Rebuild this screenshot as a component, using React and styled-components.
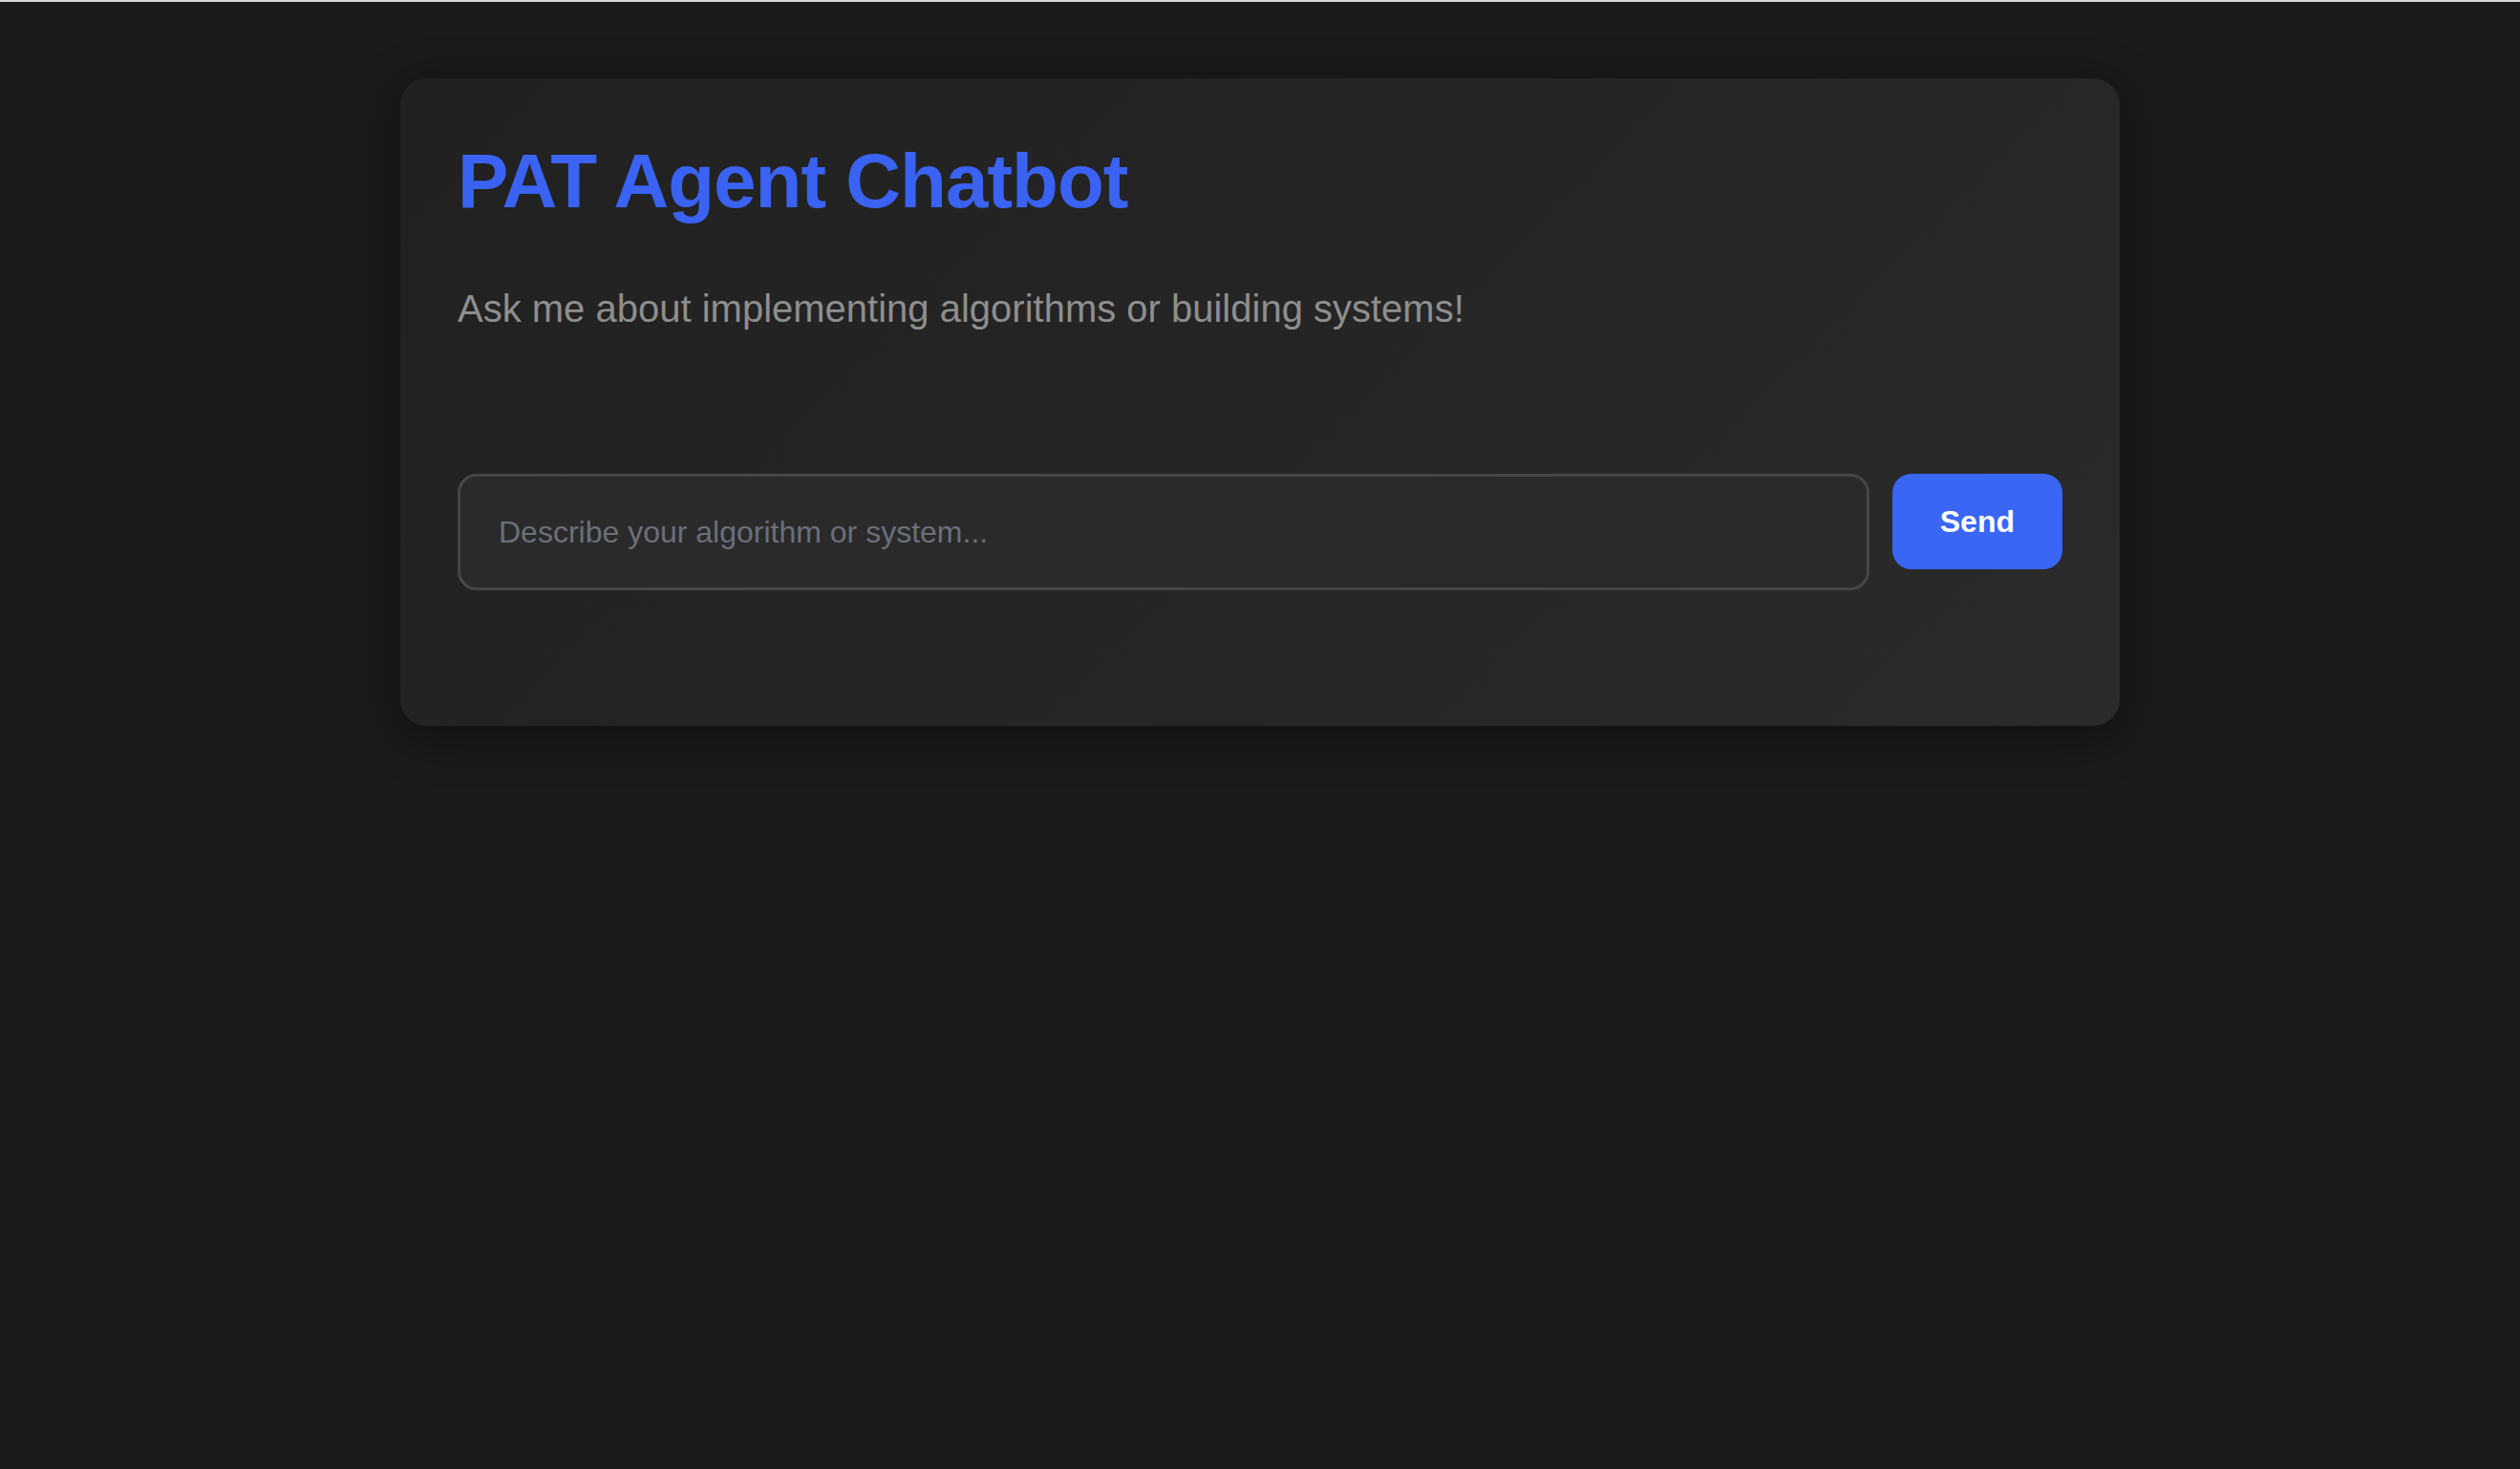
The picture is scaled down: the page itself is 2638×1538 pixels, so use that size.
import React, { useState } from 'react'
import styled, { createGlobalStyle } from 'styled-components'

const GlobalStyle = createGlobalStyle`
  * { box-sizing: border-box; }
  html, body { margin: 0; padding: 0; }
  body {
    min-height: 100vh;
    background: #1b1b1b;
    border-top: 2px solid #d9d9d9;
    font-family: "Liberation Sans", Arial, Helvetica, sans-serif;
  }
`

const Page = styled.div`
  padding-top: 80px;
  display: flex;
  justify-content: center;
`

const Card = styled.div`
  width: 1800px;
  padding: 62px 60px 60px;
  border-radius: 28px;
  background: linear-gradient(135deg, #212121 0%, #252525 50%, #2b2b2b 100%);
  box-shadow: 0 10px 50px rgba(0, 0, 0, 0.45);
`

const Title = styled.h1`
  margin: 0;
  font-size: 80px;
  font-weight: 700;
  line-height: normal;
  letter-spacing: -1px;
  color: #3a63f3;
`

const Subtitle = styled.p`
  margin: 65px 0 0;
  font-size: 40px;
  line-height: normal;
  color: #8e8e8e;
`

const Messages = styled.div`
  min-height: 150px;
`

const InputRow = styled.form`
  display: flex;
  align-items: flex-start;
  gap: 24px;
  margin-bottom: 82px;
`

const TextInput = styled.input`
  flex: 1;
  height: 122px;
  padding: 0 40px;
  border: 3px solid #464646;
  border-radius: 20px;
  background: #2a2a2a;
  color: #e0e0e0;
  font-family: inherit;
  font-size: 32px;
  outline: none;

  &::placeholder {
    color: #6b6f7b;
  }
`

const SendButton = styled.button`
  height: 100px;
  padding: 0 50px;
  border: none;
  border-radius: 20px;
  background: #3a66f6;
  color: #ffffff;
  font-family: inherit;
  font-size: 32px;
  font-weight: 700;
  cursor: pointer;
`

const App = () => {
  const [text, setText] = useState('')

  return (
    <>
      <GlobalStyle />
      <Page>
        <Card>
          <Title>PAT Agent Chatbot</Title>
          <Subtitle>Ask me about implementing algorithms or building systems!</Subtitle>
          <Messages />
          <InputRow onSubmit={(e) => e.preventDefault()}>
            <TextInput
              value={text}
              onChange={(e) => setText(e.target.value)}
              placeholder="Describe your algorithm or system..."
            />
            <SendButton type="submit">Send</SendButton>
          </InputRow>
        </Card>
      </Page>
    </>
  )
}

export default App
